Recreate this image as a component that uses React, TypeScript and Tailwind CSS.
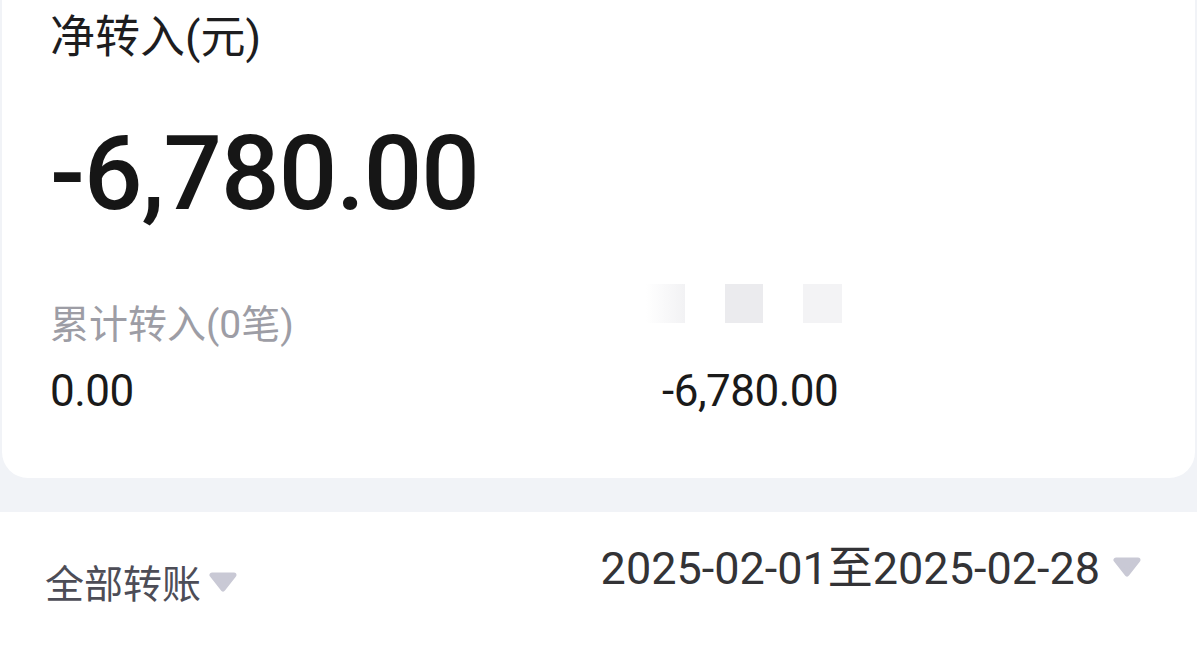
function Caret({ className }: { className?: string }) {
  return (
    <svg className={className} width="30" height="20" viewBox="0 0 30 20">
      <path d="M4 3 H26 L15 17 Z" fill="#c9c9d5" stroke="#c9c9d5" strokeWidth="5" strokeLinejoin="round" />
    </svg>
  );
}

export default function App() {
  return (
    <div className="w-[1197px] h-[647px] overflow-hidden bg-[#f1f3f7] font-['Roboto','Noto_Sans_CJK_SC',sans-serif]">
      <div className="mx-[2px] h-[478px] rounded-b-[26px] bg-white pl-[48px] pt-[9px]">
        <div className="text-[45px] leading-[58px] text-[#1d1d1f]">净转入(元)</div>
        <div className="mt-[55px] text-[103px] font-medium leading-none tracking-[-1px] text-[#161616]">
          -6,780.00
        </div>
        <div className="mt-[78px] grid grid-cols-[612px_1fr]">
          <div>
            <div className="text-[39px] leading-[44px] text-[#9d9da5]">累计转入(0笔)</div>
            <div className="mt-[22px] text-[44px] leading-none tracking-[-0.5px] text-[#1a1a1a]">0.00</div>
          </div>
          <div className="relative">
            <div className="absolute left-[-16px] top-[-19px] flex gap-[40px]">
              <div className="h-[39px] w-[39px] bg-gradient-to-r from-white to-[#f2f2f4]" />
              <div className="h-[39px] w-[38px] bg-[#ebebee]" />
              <div className="h-[39px] w-[39px] bg-[#f3f3f5]" />
            </div>
            <div className="h-[44px]" />
            <div className="mt-[22px] text-[44px] leading-none tracking-[-0.5px] text-[#1a1a1a]">-6,780.00</div>
          </div>
        </div>
      </div>
      <div className="mt-[34px] flex h-[135px] items-start justify-between bg-white pl-[45px] pr-[55px]">
        <div className="mt-[49px] flex items-center gap-[7px]">
          <span className="text-[39px] leading-[48px] text-[#4d4d57]">全部转账</span>
          <Caret className="mt-[-6px]" />
        </div>
        <div className="mt-[30px] flex items-center gap-[12px]">
          <span className="text-[45px] leading-[54px] text-[#333336]">2025-02-01至2025-02-28</span>
          <Caret className="mt-[-4px]" />
        </div>
      </div>
    </div>
  );
}
